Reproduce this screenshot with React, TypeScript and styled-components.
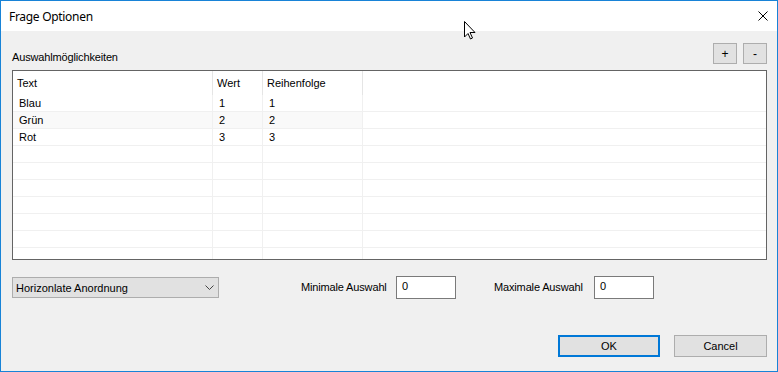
import React from 'react';
import styled, { createGlobalStyle } from 'styled-components';

const GlobalStyle = createGlobalStyle`
  html, body {
    margin: 0;
    padding: 0;
    background: #f0f0f0;
  }
  * {
    box-sizing: border-box;
  }
`;

const Window = styled.div`
  position: relative;
  display: flex;
  flex-direction: column;
  width: 778px;
  height: 372px;
  border: 1px solid #1883d7;
  background: #f0f0f0;
  font-family: "Liberation Sans", Arial, sans-serif;
  font-size: 11px;
  color: #000;
  overflow: hidden;
`;

const TitleBar = styled.div`
  display: flex;
  align-items: center;
  justify-content: space-between;
  height: 30px;
  padding: 0 9px 0 8px;
  background: #fff;
`;

const Title = styled.span`
  font-family: "Segoe UI", "Noto Sans", sans-serif;
  font-size: 12px;
  letter-spacing: -0.3px;
`;

const CloseIcon = styled.svg`
  width: 10px;
  height: 10px;
`;

const Body = styled.div`
  display: flex;
  flex: 1;
  flex-direction: column;
  padding: 12px 10px 14px 11px;
`;

const ListHeader = styled.div`
  display: flex;
  align-items: flex-end;
  height: 21px;
`;

const Label = styled.span<{ $width?: number }>`
  line-height: 13px;
  white-space: nowrap;
  letter-spacing: -0.15px;
  width: ${(p) => (p.$width ? `${p.$width}px` : 'auto')};
  flex-shrink: 0;
`;

const SmallButtons = styled.div`
  display: flex;
  gap: 6px;
  margin-left: auto;
`;

const SmallButton = styled.button`
  width: 24px;
  height: 21px;
  padding: 0;
  border: 1px solid #adadad;
  background: #e1e1e1;
  font-family: inherit;
  font-size: 12px;
  line-height: 1;
  color: #000;
`;

const Table = styled.div`
  margin-top: 6px;
  height: 190px;
  border: 1px solid #646464;
  background: #fff;
  overflow: hidden;
`;

const Row = styled.div<{ $head?: boolean }>`
  display: grid;
  grid-template-columns: 200px 50px 100px 1fr;
  height: ${(p) => (p.$head ? '24px' : '17px')};
  border-bottom: ${(p) => (p.$head ? 'none' : '1px solid #f0f0f0')};
`;

const Cell = styled.div<{ $head?: boolean; $alt?: boolean; $filler?: boolean }>`
  display: flex;
  align-items: center;
  padding-left: ${(p) => (p.$head ? '4px' : '6px')};
  border-right: ${(p) => (p.$filler ? 'none' : `1px solid ${p.$head ? '#e5e5e5' : '#f0f0f0'}`)};
  background: ${(p) => (p.$alt && !p.$filler ? '#f9f9f9' : '#fff')};
  white-space: nowrap;
`;

const Controls = styled.div`
  display: flex;
  align-items: center;
  height: 23px;
  margin-top: 16px;
`;

const Combo = styled.div`
  display: flex;
  align-items: center;
  justify-content: space-between;
  width: 207px;
  height: 21px;
  padding: 0 4px 0 3px;
  border: 1px solid #adadad;
  background: #e1e1e1;
`;

const Chevron = styled.svg`
  width: 9px;
  height: 5px;
`;

const Field = styled.div<{ $gap: number }>`
  display: flex;
  align-items: center;
  margin-left: ${(p) => p.$gap}px;
`;

const TextBox = styled.div`
  width: 60px;
  height: 23px;
  padding: 3px 5px;
  border: 1px solid #7a7a7a;
  background: #fff;
  line-height: 13px;
`;

const Footer = styled.div`
  display: flex;
  justify-content: flex-end;
  gap: 14px;
  margin-top: auto;
`;

const DialogButton = styled.button<{ $primary?: boolean; $width: number }>`
  width: ${(p) => p.$width}px;
  height: 22px;
  padding: 0;
  border: ${(p) => (p.$primary ? '2px solid #0078d7' : '1px solid #adadad')};
  background: #e1e1e1;
  font-family: inherit;
  font-size: 11px;
  color: #000;
`;

const Cursor = styled.svg`
  position: absolute;
  left: 463px;
  top: 20px;
  width: 12px;
  height: 19px;
`;

const rows = [
  ['Blau', '1', '1'],
  ['Grün', '2', '2'],
  ['Rot', '3', '3'],
  ['', '', ''],
  ['', '', ''],
  ['', '', ''],
  ['', '', ''],
  ['', '', ''],
  ['', '', ''],
  ['', '', ''],
];

const App = () => (
  <>
    <GlobalStyle />
    <Window>
      <TitleBar>
        <Title>Frage Optionen</Title>
        <CloseIcon viewBox="0 0 10 10">
          <path d="M0.5 0.5 L9.5 9.5 M9.5 0.5 L0.5 9.5" stroke="#000" strokeWidth="1" />
        </CloseIcon>
      </TitleBar>
      <Body>
        <ListHeader>
          <Label>Auswahlmöglichkeiten</Label>
          <SmallButtons>
            <SmallButton>+</SmallButton>
            <SmallButton>-</SmallButton>
          </SmallButtons>
        </ListHeader>
        <Table>
          <Row $head>
            <Cell $head>Text</Cell>
            <Cell $head>Wert</Cell>
            <Cell $head>Reihenfolge</Cell>
            <Cell $head $filler />
          </Row>
          {rows.map((r, i) => (
            <Row key={i}>
              {r.map((v, j) => (
                <Cell key={j} $alt={i === 1}>
                  {v}
                </Cell>
              ))}
              <Cell $filler />
            </Row>
          ))}
        </Table>
        <Controls>
          <Combo>
            <span>Horizonlate Anordnung</span>
            <Chevron viewBox="0 0 9 5">
              <path d="M0.5 0.5 L4.5 4.5 L8.5 0.5" fill="none" stroke="#444" strokeWidth="1" />
            </Chevron>
          </Combo>
          <Field $gap={82}>
            <Label $width={95}>Minimale Auswahl</Label>
            <TextBox>0</TextBox>
          </Field>
          <Field $gap={38}>
            <Label $width={100}>Maximale Auswahl</Label>
            <TextBox>0</TextBox>
          </Field>
        </Controls>
        <Footer>
          <DialogButton $primary $width={102}>OK</DialogButton>
          <DialogButton $width={93}>Cancel</DialogButton>
        </Footer>
      </Body>
      <Cursor viewBox="0 0 12 19">
        <path
          d="M0.5 0.5 L0.5 16 L4 12.5 L6.5 18 L8.5 17 L6 11.5 L11 11.5 Z"
          fill="#fff"
          stroke="#000"
          strokeWidth="1"
          strokeLinejoin="miter"
        />
      </Cursor>
    </Window>
  </>
);

export default App;
